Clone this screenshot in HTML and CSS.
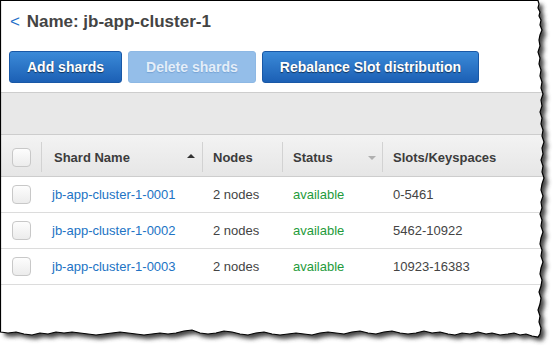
FILE: index.html
```html
<!DOCTYPE html>
<html>
<head>
    <title>Shards - jb-app-cluster-1</title>
    <link rel="stylesheet" href="styles.css">
</head>
<body>
    <div class="shot">
        <h1 class="title"><a class="back" href="#">&lt;</a> Name: jb-app-cluster-1</h1>

        <div class="actions">
            <button class="btn">Add shards</button>
            <button class="btn" disabled>Delete shards</button>
            <button class="btn">Rebalance Slot distribution</button>
        </div>

        <div class="toolbar"></div>

        <div class="grid">
            <div class="row head">
                <div class="cell check"><span class="box"></span></div>
                <div class="cell first"><span class="label">Shard Name</span><span class="sort up"></span></div>
                <div class="cell"><span class="label">Nodes</span></div>
                <div class="cell"><span class="label">Status</span><span class="sort down"></span></div>
                <div class="cell"><span class="label">Slots/Keyspaces</span></div>
            </div>
            <div class="row">
                <div class="cell check"><span class="box"></span></div>
                <div class="cell"><a href="#">jb-app-cluster-1-0001</a></div>
                <div class="cell">2 nodes</div>
                <div class="cell ok">available</div>
                <div class="cell">0-5461</div>
            </div>
            <div class="row">
                <div class="cell check"><span class="box"></span></div>
                <div class="cell"><a href="#">jb-app-cluster-1-0002</a></div>
                <div class="cell">2 nodes</div>
                <div class="cell ok">available</div>
                <div class="cell">5462-10922</div>
            </div>
            <div class="row">
                <div class="cell check"><span class="box"></span></div>
                <div class="cell"><a href="#">jb-app-cluster-1-0003</a></div>
                <div class="cell">2 nodes</div>
                <div class="cell ok">available</div>
                <div class="cell">10923-16383</div>
            </div>
        </div>

        <!-- torn paper edge drawn over the page -->
        <svg class="torn" width="554" height="349" viewBox="0 0 554 349">
            <defs>
                <path id="edge" d="M0.5 0.5 L538 0.5 L539 4 L538 8 L540 12 L539 16 L541 20 L540 25 L542 30 L540 35 L539 40 L540 46 L538 52 L540 58 L539 64 L541 70 L540 76 L542 82 L541 88 L543 94 L541 100 L542 106 L540 112 L542 118 L541 124 L543 130 L542 136 L544 142 L542 148 L543 154 L541 160 L543 166 L542 172 L544 178 L542 184 L541 190 L543 196 L541 202 L542 208 L540 214 L542 220 L541 226 L543 232 L541 238 L540 244 L542 250 L541 256 L543 262 L541 268 L540 274 L542 280 L541 286 L539 292 L541 298 L540 304 L538 310 L540 316 L539 322 L541 328 L540 334 L538 337 L532 336 L526 334 L520 335 L514 333 L508 334 L500 335 L492 333 L486 334 L478 332 L470 334 L462 333 L455 335 L448 334 L440 332 L432 333 L424 331 L416 333 L408 334 L400 333 L392 331 L384 332 L376 334 L368 333 L360 331 L352 332 L344 334 L336 333 L328 332 L320 333 L312 335 L304 334 L296 333 L288 334 L280 335 L272 334 L264 332 L256 333 L248 335 L240 334 L232 332 L224 331 L216 333 L208 334 L200 333 L192 330 L184 331 L176 333 L168 334 L160 333 L152 334 L144 335 L136 334 L128 333 L120 332 L112 333 L104 334 L96 335 L88 334 L80 333 L72 332 L64 333 L56 332 L48 334 L40 333 L32 335 L24 334 L16 332 L8 333 L0.5 332 Z"/>
                <mask id="outside">
                    <rect width="554" height="349" fill="#fff"/>
                    <use href="#edge" fill="#000"/>
                </mask>
                <filter id="soft" x="-10%" y="-10%" width="120%" height="120%">
                    <feGaussianBlur stdDeviation="2.2"/>
                </filter>
            </defs>
            <g mask="url(#outside)">
                <rect width="554" height="349" fill="#fff"/>
                <use href="#edge" fill="#444" transform="translate(4 4)" filter="url(#soft)"/>
            </g>
            <use href="#edge" fill="none" stroke="#000" stroke-width="1.2"/>
        </svg>
    </div>
</body>
</html>
```

FILE: styles.css
```css
body {
    margin: 0;
    background: #fff;
    font-family: "Liberation Sans", Arial, sans-serif;
    color: #444;
}

.shot {
    position: relative;
    width: 554px;
    height: 349px;
    overflow: hidden;
}

.title {
    margin: 12px 0 0 10px;
    font-size: 17px;
    line-height: 20px;
    font-weight: bold;
    color: #444;
}

.back {
    color: #1e6fc8;
    font-weight: normal;
    text-decoration: none;
    margin-right: 2px;
}

.actions {
    display: flex;
    gap: 6px;
    margin: 19px 0 0 9px;
}

.btn {
    height: 32px;
    padding: 0 17px;
    font-family: "Liberation Sans", Arial, sans-serif;
    font-size: 14px;
    font-weight: bold;
    color: #fff;
    text-shadow: 0 1px 1px rgba(0, 0, 0, 0.55);
    background: linear-gradient(#3b8ad8, #1c60b5);
    border: 1px solid #1958a6;
    border-radius: 3px;
    cursor: pointer;
}

.btn:disabled {
    color: #e4eef9;
    text-shadow: 0 1px 1px rgba(60, 110, 170, 0.35);
    background: #94bee9;
    border-color: #8db8e4;
    cursor: default;
}

.toolbar {
    margin-top: 9px;
    height: 41px;
    background: #e8e8e8;
    border-top: 1px solid #cdcdcd;
    border-bottom: 1px solid #cdcdcd;
}

.grid {
    margin-left: 1px;
}

.row {
    display: grid;
    grid-template-columns: 40px 161px 80px 100px 1fr;
    height: 35px;
    border-bottom: 1px solid #dcdcdc;
    font-size: 13px;
}

.row.head {
    height: 41px;
    background: linear-gradient(#f3f3f3, #e6e6e6);
    border-bottom: 1px solid #cdcdcd;
    font-weight: bold;
    color: #3c3c3c;
}

.cell {
    display: flex;
    align-items: center;
    padding-left: 11px;
}

.head .cell {
    margin: 7px 0 4px;
    padding-left: 10px;
    padding-right: 7px;
    border-left: 1px solid #d2d2d2;
}

.head .cell.first {
    padding-left: 12px;
}

.head .cell.check {
    border-left: none;
    padding-left: 11px;
}

.label {
    flex: 1;
}

.box {
    width: 17px;
    height: 17px;
    border: 1px solid #c8c8c8;
    border-radius: 4px;
    background: linear-gradient(#fdfdfd, #ececec);
}

.sort {
    width: 0;
    height: 0;
    border-left: 4px solid transparent;
    border-right: 4px solid transparent;
}

.sort.up {
    border-bottom: 4px solid #333;
    margin-top: -3px;
}

.sort.down {
    border-top: 4px solid #b0b0b0;
    margin-top: 2px;
    margin-right: -1px;
}

.cell a {
    color: #2173c4;
    text-decoration: none;
}

.cell.ok {
    color: #1f9b3c;
}

.torn {
    position: absolute;
    left: 0;
    top: 0;
    pointer-events: none;
}
```
